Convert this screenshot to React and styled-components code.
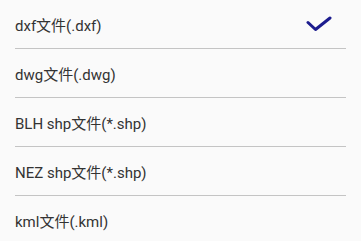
import React from 'react';
import styled, { createGlobalStyle } from 'styled-components';

const GlobalStyle = createGlobalStyle`
    html, body {
        margin: 0;
        padding: 0;
        background-color: #fafafa;
    }
    body {
        font-family: Roboto, "Noto Sans CJK SC", sans-serif;
    }
`
const List = styled.ul`
    list-style: none;
    margin: 0;
    padding: 0 15px;
    width: 361px;
    box-sizing: border-box;
`
const Item = styled.li`
    display: flex;
    align-items: center;
    justify-content: space-between;
    height: 48px;
    border-bottom: ${props => props.last ? 'none' : '1px solid #c4c4c4'};
    cursor: pointer;
`
const Label = styled.span`
    font-size: 15px;
    color: #333333;
`
const Check = styled.svg`
    width: 26px;
    height: 16px;
    margin-right: 14px;
`

const formats = [
    'dxf文件(.dxf)',
    'dwg文件(.dwg)',
    'BLH shp文件(*.shp)',
    'NEZ shp文件(*.shp)',
    'kml文件(.kml)'
]

const App = () => {
    const selected = 0

    return (
        <>
            <GlobalStyle/>
            <List>
                {formats.map((name, i) => {
                    return <Item key={i} last={i === formats.length - 1}>
                        <Label>{name}</Label>
                        {i === selected &&
                            <Check viewBox="0 0 26 16">
                                <path d="M2 6.5 L9.5 13.5 L24 2" fill="none" stroke="#1c1c8e" strokeWidth="3" strokeLinecap="round" strokeLinejoin="round"/>
                            </Check>
                        }
                    </Item>
                })}
            </List>
        </>
    )
}

export default App
